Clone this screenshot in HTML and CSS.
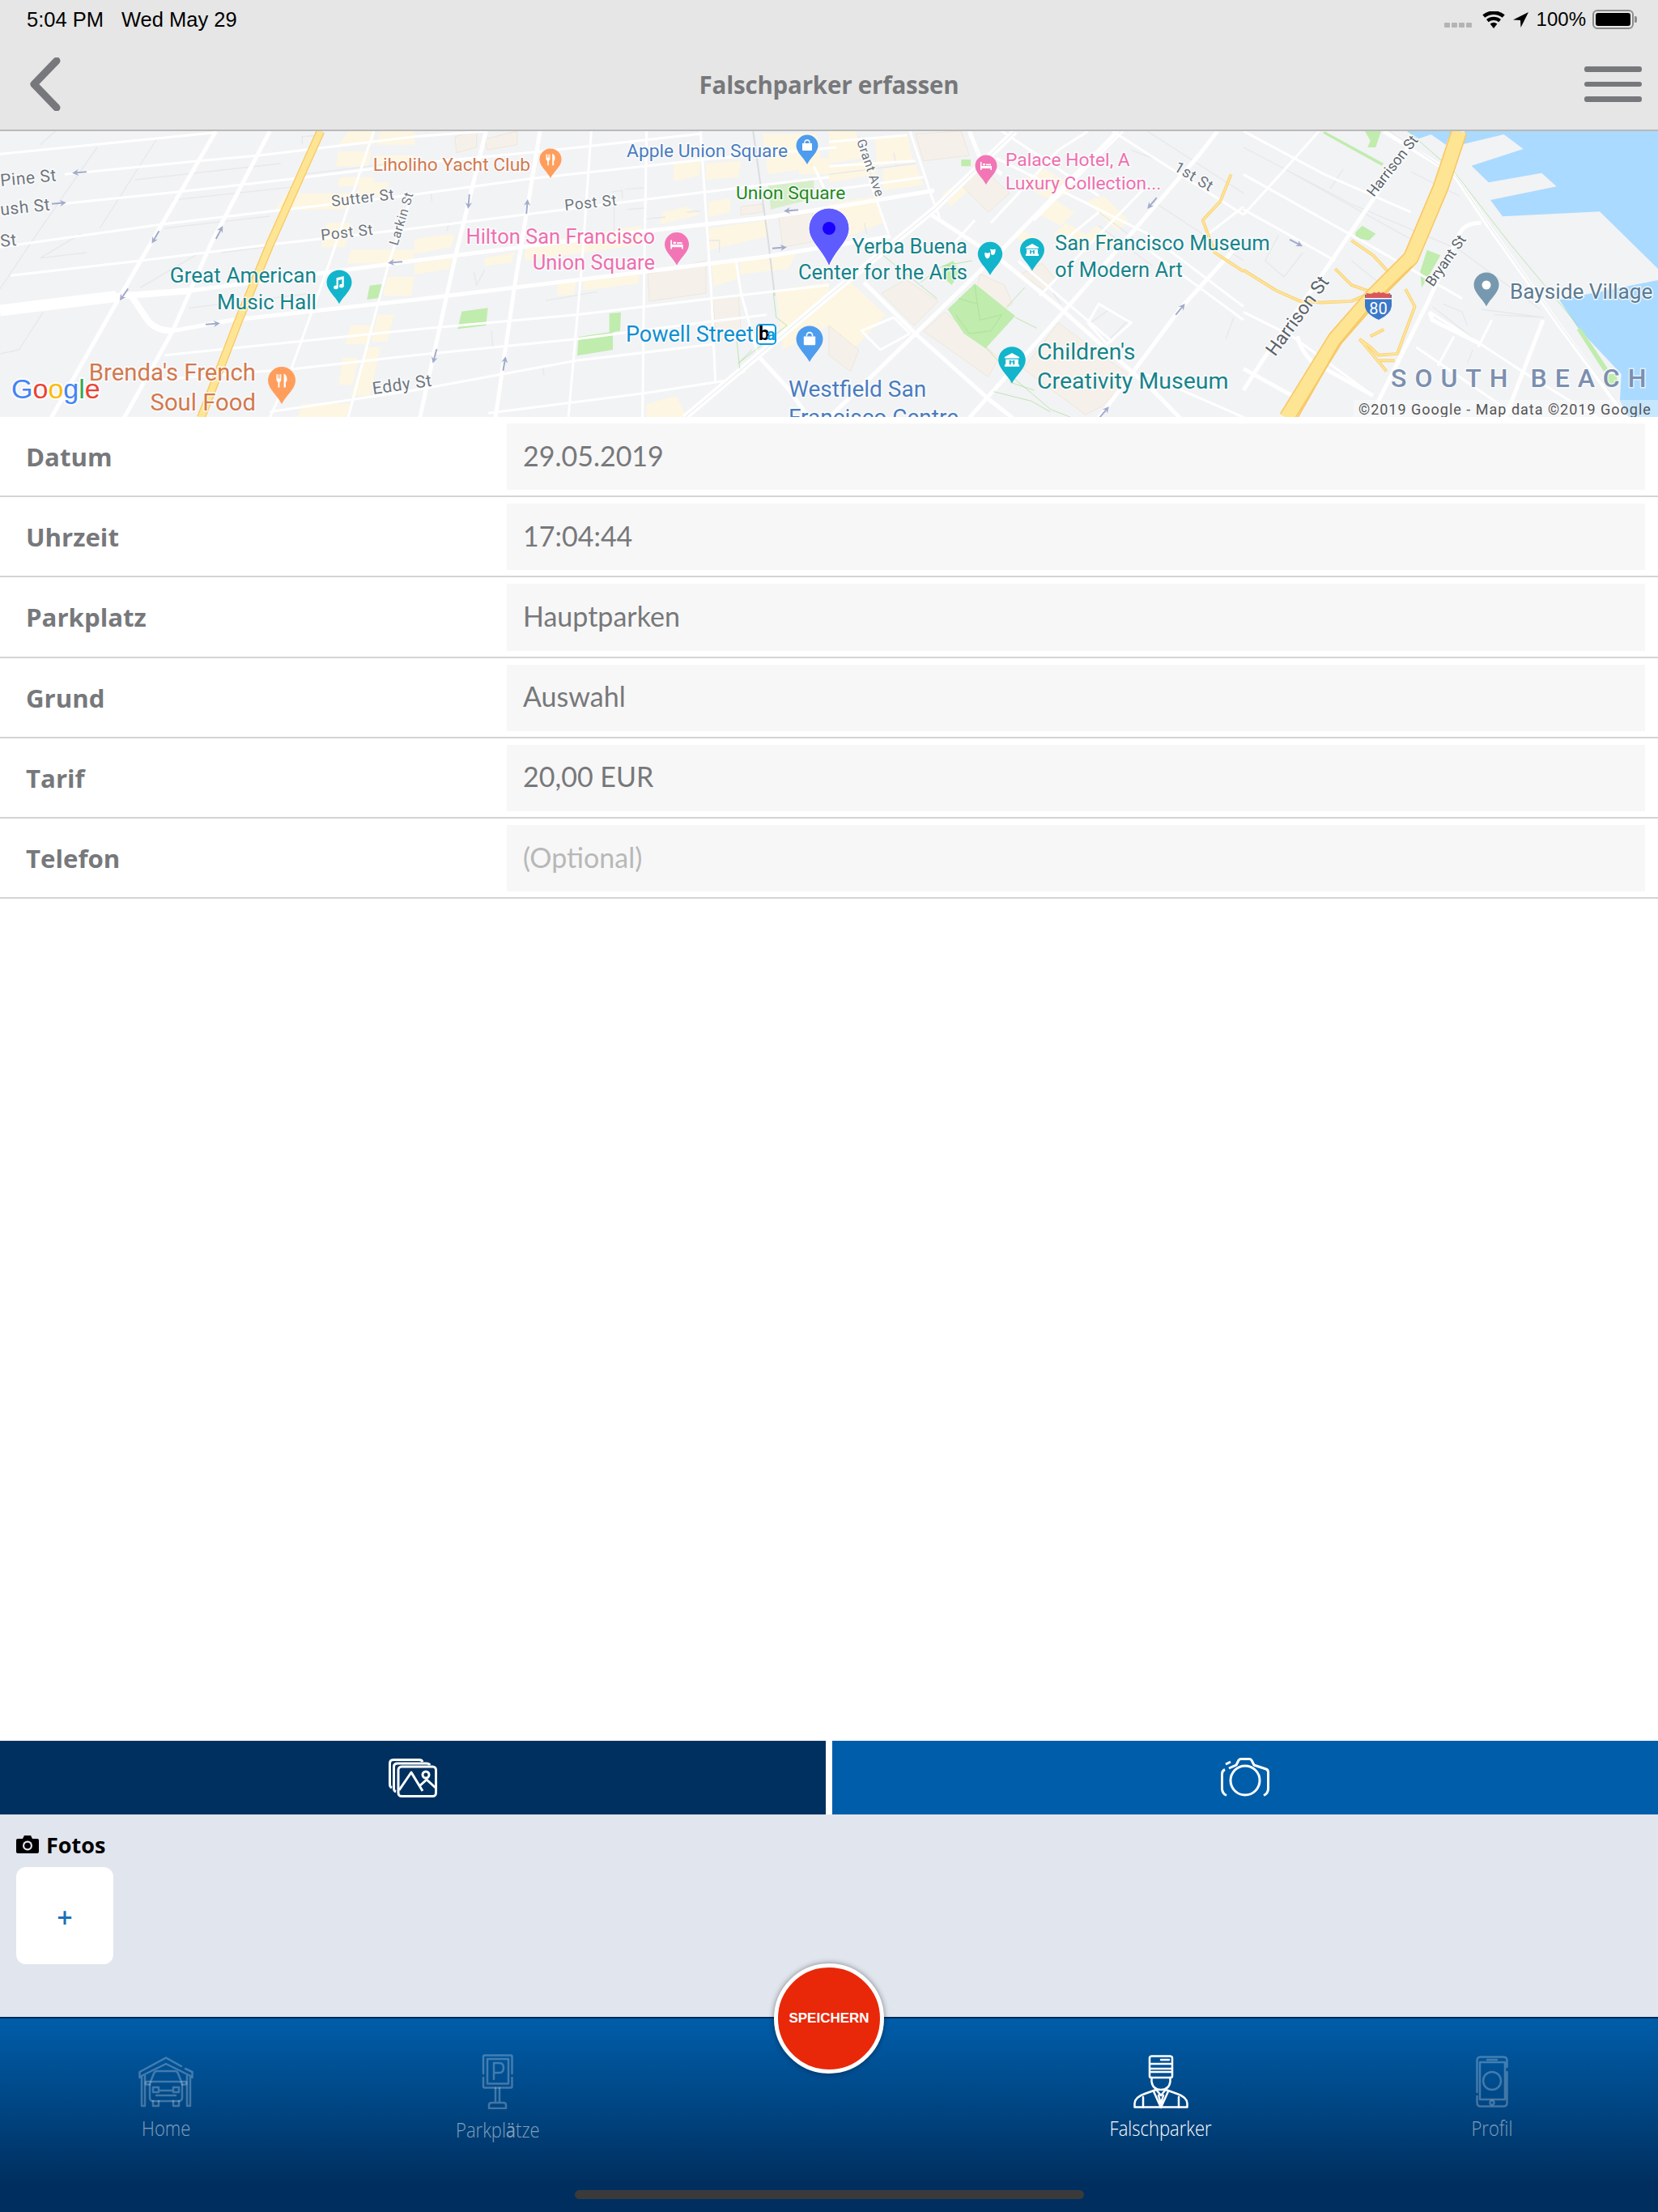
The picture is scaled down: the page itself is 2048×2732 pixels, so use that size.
FILE: index.html
```html
<!DOCTYPE html>
<html lang="de">
<head>
<meta charset="utf-8">
<title>Falschparker erfassen</title>
<link rel="stylesheet" href="styles.css">
</head>
<body>
<div class="app">
  <header class="topbar">
    <div class="status">
      <div class="status-left"><span>5:04 PM</span><span>Wed May 29</span></div>
      <div class="status-right">
        <span class="signal"><i></i><i></i><i></i><i></i></span>
        <svg class="wifi" viewBox="0 0 28 21"><path d="M14 21 9.6 15.6a7 7 0 0 1 8.8 0Z"/><path d="M7.7 13.3 5 10a14 14 0 0 1 18 0l-2.700 3.300a10 10 0 0 0-12.600 0Z"/><path d="M3.200 7.800.3 4.300a21.500 21.500 0 0 1 27.400 0l-2.900 3.500a17 17 0 0 0-21.600 0Z"/></svg>
        <svg class="loc" viewBox="0 0 19 19"><path d="M19 0 0 9.500l9 .5.500 9Z"/></svg>
        <span>100%</span>
        <span class="battery"><b></b></span>
      </div>
    </div>
    <nav class="navbar">
      <svg class="back" viewBox="0 0 40 66"><path d="M34 4 6 33l28 29"/></svg>
      <h1>Falschparker erfassen</h1>
      <div class="burger"><i></i><i></i><i></i></div>
    </nav>
  </header>

  <div class="map">
    <svg viewBox="0 0 2048 354" width="2048" height="354">
      <defs>
        <path id="pin" d="M-10 0A10 10 0 1 1 10 0C10 6 3 11 0 17-3 11-10 6-10 0Z"/>
        <path id="arr" d="M-9-1 3-1 1-4 9 0 1 4 3 1-9 1Z"/>
        <g id="g-food"><path d="M-5-6V-1Q-5 1-3.500 1.500V6.500H-2V1.500Q-.5 1-.5-1V-6H-1.500V-2H-2.200V-6H-3V-2H-3.800V-6Z"/><path d="M2-6.500Q5-5.500 5-1 5 1 3.800 1.500V6.500H2Z"/></g>
        <g id="g-bag"><path d="M-6-3H6V5Q6 6 5 6H-5Q-6 6-6 5Z"/><path d="M-3-3V-4A3 3 0 0 1 3-4V-3" fill="none" stroke="#fff" stroke-width="1.300"/></g>
        <g id="g-bed"><path d="M-7-5H-5.500V0H7V5H5.500V3H-5.500V5H-7Z"/><path d="M-4-3H-1V-.8H-4ZM0-2.500H6V-.8H0Z"/></g>
        <g id="g-note"><path d="M-3-5 5-7V3.500A2.500 2 0 1 1 3 1.700V-3.500L-1-2.500V5A2.500 2 0 1 1-3 3.200Z"/></g>
        <g id="g-mask"><path d="M-6-2Q-3-.5 0-2 .5 4-3 5-6.500 4-6-2Z"/><path d="M0-6Q3-4.500 6-6 6.500 0 3 1 1.500.8 1-.5L.8-3Z"/></g>
        <g id="g-mus"><path d="M0-7 7-3V-2H-7V-3ZM-6-1H6V4H7V6H-7V4H-6ZM-2.500 0V4H-1V2H1V4H2.500V0H1V1H-1V0Z"/></g>
      </defs>

      <rect class="land" width="2048" height="354"/>

      <g transform="scale(.33333)">
        <!-- blocks, beige -->
        <g class="beige">
          <path d="M1290 0h100l-5 50h-130zM1410 0h126v50h-140zM1255 75h120l-10 55h-120zM1390 90h146v50h-150zM1260 170h130l-15 35h-125zM1060 230h260l-30 60h-270zM1340 190h100l-15 50h-110zM1210 340h90l-20 90h-90zM1300 440h236l-10 50h-240zM1435 540h100l-10 70h-105zM1300 720h80l-20 70h-80zM1400 680h60l-25 100h-60zM1270 840h60l-25 100h-50zM1360 800h50l-40 180h-70zM1120 1010h180l-20 52h-180z"/>
          <g transform="translate(1536)">
            <path d="M0 400l150-20-15 50-135 25zM0 490l140-20-10 40-130 20zM260 470l110-20-10 35-100 15zM410 420l430-70 0 70-430 60zM530 560l70-10-10 55-60 5zM625 550l210-30-5 45-205 25zM920 300l90-20 50 30-150 35zM960 120l100-15-5 60-95 20zM1090 260l80-10 0 50-80 20zM1090 360l220-30 0 60-220 50zM1100 490l100-15 0 70-90 30zM1205 480l210-30-30 60-180 20zM1340 590l196-30v160l-170 90zM860 1010l110-30 40 82H860zM1290 10h200l20 120-200 30zM1080 120l130-10-10 60-120 10zM1420 100h116v60h-110z"/>
          </g>
          <g transform="translate(3072)">
            <path d="M0 0h100l20 100-120 20zM170 20l120-10 20 100-130 20zM0 130l170-25 5 55-175 30zM200 140l120-20 30 80-150 20zM0 270l170-30 30 100-130 50H0zM420 230l90-60 30 30-90 80zM700 190l100-50 120 70-90 50zM830 250l80 50-50 50-80-40zM950 260l70-20 90 90-40 40zM880 340l100 60-50 40-100-60zM990 350l80 60-40 30-80-50zM720 370l60 30-30 30-60-40zM0 600l80-40 130 120L70 830 0 790z"/>
          </g>
        </g>
        <!-- blocks, building tint -->
        <g class="bldg">
          <g transform="translate(1536)">
            <path d="M150 20l80-20 0 60-75 20zM260 30l120-30 0 50-110 20zM865 530l215-50 0 120-210 30zM1105 625l95-15 10 130-90 40zM1350 320l125-20 0 110-110 20zM1210 280l80-10 0 30-80 10z"/>
          </g>
          <g transform="translate(3072)">
            <path d="M320 10l170-10 30 90-170 20zM480 190l90-50 100 90-80 70zM195 600l90-50 120 80-90 90zM0 720l110 90-30 80-80-60zM350 740l80-70 200 170-40 70zM560 530l90 40 30 70-30 20-100-80zM710 530l80-40 50 60-40 40zM720 880l130-170 270 200-110 110-60 30z"/>
          </g>
        </g>
        <!-- water -->
        <g transform="translate(4608)">
          <path class="water" d="M605 0 650 28 695 12 750 50 770 0H820L805 50 965 12 1037 66 845 128 908 190 1105 155 1160 205 915 255 960 316 1320 298 1536 510V552L1170 625 1240 730 1400 900 1395 1000 1425 1062H1536V0Z"/>
        </g>
        <!-- parks -->
        <g class="green">
          <path d="M1370 572l50-6-10 52-50 6z"/>
          <g transform="translate(1536)">
            <path d="M175 668l97-13-7 65-105 13zM608 762l114-17V675l43-3-3 68-27 5v65L603 832z"/>
            <path class="pale" d="M1310 195l170-20v75l-160 40z"/>
          </g>
          <g transform="translate(3072)">
            <path d="M540 565 690 685 580 805 500 750 440 660ZM420 500l40-20 25 40-30 50-35-30zM490 105h35v25h-35z"/>
          </g>
          <g transform="translate(4608)">
            <path d="M680 440l50 20-40 70-30 50-5-60zM415 375l25-25 50 30-25 25-50-10zM300 0l220 120-8 8L295 8zM450 0h60l-20 60h-30l10-25zM1235 735l15-5 100 150-15 10zM1340 900h40l10 40-40 10z"/>
          </g>
        </g>

        <!-- thin alley lines -->
        <g class="r0">
          <path d="M500 180 1040 120M640 255 1100 205M610 360 1000 315M820 450 1020 425M700 655 1160 600M1120 160 1536 110"/>
          <path d="M360 60 130 390 0 585M580 30 370 360M205 0 150 50M160 670 70 810 0 825M300 380 150 470 320 450M740 450 520 580M1120 50 1120 20 1190 15"/>
          <g transform="translate(1536)">
            <path d="M60 225 65 260M130 335 120 370M220 520 230 570 260 515M485 628 675 595M860 325 930 318M790 290 850 285M1010 300 1060 295M285 740 290 800M475 870 480 905M1090 440V405H1130V450M730 225 770 220V250M780 215 850 210M740 260V400"/>
            <path class="rail" d="M1255 0 1310 400 1335 610"/>
          </g>
          <g transform="translate(3072)">
            <path d="M240 80 250 130M130 340 140 380M0 160 320 120M0 220 340 170M110 20 180 240M1120 70 1200 100M1040 660 970 710 1040 770 1110 700ZM1500 690 1470 770M1000 350 1200 500M830 600 860 640"/>
            <path d="M1000 300 1536 700M1180 0 1536 230M1200 260 1536 480"/>
          </g>
          <g transform="translate(4608)">
            <path d="M0 60 400 270 800 440 1100 660M170 150 620 400M370 140 320 215M130 385 80 480 150 540 220 450M700 650 880 790M930 680 1110 690 880 660M740 640 810 670 830 720M850 810 830 860M400 480 500 560M620 150 800 240"/>
          </g>
        </g>

        <!-- streets -->
        <g class="r1">
          <path d="M0 85 800 5"/>
          <path d="M240 160 720 112 960 90 1536 20 1800 0"/>
          <path d="M220 270 660 225 1100 175 1536 120 2006 75 2596 10"/>
          <path d="M0 430 600 345 1020 295 1536 235 1976 175 2610 105 3100 60"/>
          <path d="M40 535 520 480 1000 420 1536 360 2616 225 3072 170"/>
          <path d="M610 830 1536 735 2136 680 2636 620 3072 570"/>
          <path d="M600 920 1100 880 1536 830 2136 770 2636 705 2840 680"/>
          <path d="M1000 1040 1536 960 2136 850 2640 790"/>
          <path d="M1810 1045 2396 970 2686 925 2760 890"/>
          <path d="M1385 0 1220 490 1080 880 1000 1062"/>
          <path d="M1530 230 1440 490 1290 1062"/>
          <g transform="translate(1536)">
            <path d="M655 0 620 500 570 1062M860 0 850 600 845 1062M1060 0 1100 600 1115 930"/>
            <path d="M1190 470 1210 600 1270 820M1480 130 1536 250"/>
          </g>
          <g transform="translate(3072)">
            <path d="M300 0 380 240 410 320M150 180 220 380M600 340 850 70 960 0M760 330 1090 0M460 420 540 330"/>
            <path d="M0 130 320 110M0 40 290 15M0 220 350 170"/>
            <path d="M620 100 1180 380 1536 650M1050 0 1536 310M640 0 1000 240M700 480 1050 780M1000 640 1120 710 1030 790 960 710ZM1170 900 1536 1060M1130 400 1536 700"/>
            <path d="M840 430 1000 300M780 610 1180 200M1380 400 1536 280"/>
            <path d="M120 740 240 690 300 750 190 810Z"/>
          </g>
          <g transform="translate(4608)">
            <path d="M280 0 100 200 0 310M0 160 480 430 810 620M0 290 340 480M690 670 880 790 1110 940M780 760 720 870M1000 870 1536 1200M640 800 1020 1062M0 670 180 760 480 980M0 0 300 160 620 300"/>
            <path d="M920 700 870 800"/>
          </g>
        </g>
        <g class="r2">
          <path d="M800 0 440 620 190 1062M1000 0 780 420 640 740 460 1062"/>
          <path d="M700 592 1536 480 2396 370 2836 320 3072 285 3462 220"/>
          <path d="M640 740 860 700 1536 625 2396 520 2836 465 3300 390"/>
          <path class="link" d="M430 612 700 592M480 600 540 690Q570 740 640 740"/>
          <g transform="translate(1536)">
            <path d="M265 0 150 470 20 1062M465 0 370 580 300 1062"/>
            <path d="M1280 840 1390 960 1460 1062"/>
          </g>
          <g transform="translate(3072)">
            <path d="M0 1062 640 440 1070 0M520 1062 860 680 1370 90 1440 0M1000 1062 1300 660 1536 400"/>
            <path d="M380 310 640 480 850 650 1200 960 1300 1062M130 560 320 750 600 1000 680 1062M520 0 560 100 640 160"/>
          </g>
          <g transform="translate(4608)">
            <path d="M610 60 320 490 70 850 0 960M880 340Q820 340 800 380L680 640 500 1000 480 1062M1110 700 970 1062"/>
            <path d="M0 880 180 980M200 760Q210 810 250 850L480 980"/>
            <path d="M690 670 700 700 880 790"/>
          </g>
        </g>
        <path class="r3" d="M0 665 430 612"/>
        <!-- market street -->
        <g transform="translate(1536)">
          <path class="market" d="M1000 1062 1536 610"/>
          <path class="railline" d="M1000 1062 1536 610"/>
        </g>
        <g transform="translate(3072)">
          <path class="market" d="M0 610 390 290 690 0"/>
          <path class="railline" d="M0 610 390 290 690 0"/>
        </g>
        <g transform="translate(4608)">
          <path class="coast" d="M520 0 780 160 900 340 1170 720 1420 1062"/>
          <path class="railline" d="M540 0 790 170 910 350 1180 730 1430 1062"/>
        </g>

        <!-- faint park and building lines -->
        <g class="trail">
          <g transform="translate(1536)"><path d="M1330 600 1340 690 1380 720 1200 860M1195 780 1205 880M1250 810 1200 860"/></g>
          <g transform="translate(3072)"><path d="M200 460 400 620M340 560 420 500 530 480M540 570 550 640 480 620M550 640 560 700 640 680 600 740 520 750 470 680M690 690 770 730M725 580 660 650M580 800 690 920 820 1030 900 1062M610 965 750 1000 820 1040M670 930 760 960"/></g>
          <g transform="translate(4608)"><path d="M610 0 780 150 990 420 1240 720"/></g>
        </g>

        <!-- highway -->
        <path class="hw-edge" d="M1188 0 1000 420 885 700 745 1062"/>
        <path class="hw" d="M1188 0 1000 420 885 700 745 1062"/>
        <g transform="translate(3072)">
          <path class="ramp-edge" d="M1490 160 1450 260 1385 330 1400 370 1430 450 1536 520"/>
          <path class="ramp" d="M1490 160 1450 260 1385 330 1400 370 1430 450 1536 520"/>
        </g>
        <g transform="translate(4608)">
          <path class="ramp-edge" d="M0 515 120 590 210 630 290 635 400 630 470 600M340 510 400 570 470 595M400 405 480 460 545 530M600 585 635 650 590 770 570 825 500 830 470 800 430 770M430 770 530 890M470 760 520 735M500 850 560 850"/>
          <path class="ramp" d="M0 515 120 590 210 630 290 635 400 630 470 600M340 510 400 570 470 595M400 405 480 460 545 530M600 585 635 650 590 770 570 825 500 830 470 800 430 770M430 770 530 890M470 760 520 735M500 850 560 850"/>
          <path class="hw-edge wide" d="M800 0 730 210 620 470 480 610 340 770 160 1062"/>
          <path class="hw wide" d="M800 0 730 210 620 470 480 610 340 770 160 1062"/>
          <path class="hw-seam" d="M625 500 480 640 355 790 200 1062"/>
        </g>
      </g>

      <!-- one-way arrows -->
      <g class="arrows">
        <use href="#arr" transform="translate(98 51) rotate(175)"/>
        <use href="#arr" transform="translate(73 89) rotate(-5)"/>
        <use href="#arr" transform="translate(192 131) rotate(120)"/>
        <use href="#arr" transform="translate(271 125) rotate(-62)"/>
        <use href="#arr" transform="translate(153 202) rotate(125)"/>
        <use href="#arr" transform="translate(263 238) rotate(-5)"/>
        <use href="#arr" transform="translate(488 162) rotate(175)"/>
        <use href="#arr" transform="translate(579 87) rotate(95)"/>
        <use href="#arr" transform="translate(651 93) rotate(-85)"/>
        <use href="#arr" transform="translate(537 278) rotate(105)"/>
        <use href="#arr" transform="translate(623 287) rotate(-80)"/>
        <use href="#arr" transform="translate(977 98) rotate(175)"/>
        <use href="#arr" transform="translate(963 144) rotate(-5)"/>
        <use href="#arr" transform="translate(1423 89) rotate(130)"/>
        <use href="#arr" transform="translate(1458 220) rotate(-50)"/>
        <use href="#arr" transform="translate(1364 347) rotate(-50)"/>
        <use href="#arr" transform="translate(1601 138) rotate(28)"/>
      </g>

      <!-- street names -->
      <g class="st">
        <text transform="translate(1 68) rotate(-5.500)">Pine St</text>
        <text transform="translate(1 104) rotate(-6)">ush St</text>
        <text transform="translate(1 143) rotate(-6)">St</text>
        <text class="s" transform="translate(410 93) rotate(-6.500)">Sutter St</text>
        <text class="s" transform="translate(397 135) rotate(-6.500)">Post St</text>
        <text class="xs" transform="translate(491 142) rotate(-73)">Larkin St</text>
        <text class="s" transform="translate(698 98) rotate(-6)">Post St</text>
        <text transform="translate(461 325) rotate(-8)">Eddy St</text>
        <text class="xs" transform="translate(1058 12) rotate(71)">Grant Ave</text>
        <text class="s" transform="translate(1449 48) rotate(31)">1st St</text>
        <text class="h" transform="translate(1575 279) rotate(-54)">Harrison St</text>
        <text class="xs h2" transform="translate(1697 82) rotate(-52)">Harrison St</text>
        <text class="xs h2" transform="translate(1770 193) rotate(-55)">Bryant St</text>
      </g>

      <!-- places -->
      <g class="poi">
        <g class="orange end sm"><text x="655" y="49">Liholiho Yacht Club</text></g>
        <g class="orange end xl"><text x="316" y="308">Brenda's French</text><text x="316" y="345">Soul Food</text></g>
        <g class="blue end sm"><text x="973" y="32">Apple Union Square</text></g>
        <g class="lgreen sm"><text x="909" y="84">Union Square</text></g>
        <g class="pink end"><text x="809" y="139">Hilton San Francisco</text><text x="809" y="171">Union Square</text></g>
        <g class="teal end md"><text x="391" y="187">Great American</text><text x="391" y="220">Music Hall</text></g>
        <g class="sky md2"><text x="773" y="260">Powell Street</text></g>
        <g class="blue lg"><text x="974" y="328">Westfield San</text><text x="974" y="363">Francisco Centre</text></g>
        <g class="teal end"><text x="1195" y="151">Yerba Buena</text><text x="1195" y="183">Center for the Arts</text></g>
        <g class="teal"><text x="1303" y="147">San Francisco Museum</text><text x="1303" y="180">of Modern Art</text></g>
        <g class="teal lg2"><text x="1281" y="282">Children's</text><text x="1281" y="318">Creativity Museum</text></g>
        <g class="pink sm"><text x="1242" y="43">Palace Hotel, A</text><text x="1242" y="72">Luxury Collection...</text></g>
        <g class="slate md"><text x="1865" y="207">Bayside Village</text></g>
      </g>

      <!-- pins -->
      <use class="p-orange" href="#pin" transform="translate(680 35) scale(1.360)"/>
      <use class="g" href="#g-food" transform="translate(680 35) scale(1.100)"/>
      <use class="p-orange" href="#pin" transform="translate(348 308) scale(1.700)"/>
      <use class="g" href="#g-food" transform="translate(348 308) scale(1.300)"/>
      <use class="p-blue" href="#pin" transform="translate(997 18) scale(1.350)"/>
      <use class="g" href="#g-bag" transform="translate(997 18) scale(1)"/>
      <use class="p-blue" href="#pin" transform="translate(1000 257) scale(1.650)"/>
      <use class="g" href="#g-bag" transform="translate(1000 257) scale(1.200)"/>
      <use class="p-pink" href="#pin" transform="translate(836 140) scale(1.500)"/>
      <use class="g" href="#g-bed" transform="translate(836 140) scale(1.100)"/>
      <use class="p-pink" href="#pin" transform="translate(1218 43) scale(1.350)"/>
      <use class="g" href="#g-bed" transform="translate(1218 43)"/>
      <use class="p-teal" href="#pin" transform="translate(419 187) scale(1.550)"/>
      <use class="g" href="#g-note" transform="translate(419 187) scale(1.150)"/>
      <use class="p-teal" href="#pin" transform="translate(1223 152) scale(1.520)"/>
      <use class="g" href="#g-mask" transform="translate(1223 152) scale(1.100)"/>
      <use class="p-teal" href="#pin" transform="translate(1275 147) scale(1.500)"/>
      <use class="g" href="#g-mus" transform="translate(1275 147) scale(1.150)"/>
      <use class="p-teal" href="#pin" transform="translate(1250 283) scale(1.680)"/>
      <use class="g" href="#g-mus" transform="translate(1250 283) scale(1.300)"/>
      <use class="p-slate" href="#pin" transform="translate(1836 190) scale(1.550)"/>
      <circle class="g" cx="1836" cy="190" r="5.500"/>

      <!-- BART -->
      <rect class="bart" x="935" y="239" width="23" height="24" rx="4"/>
      <text class="bart-b" x="937" y="258">b</text>
      <text class="bart-a" x="947" y="258">a</text>

      <!-- I-80 -->
      <path class="shield-b" d="M1686 202V216Q1687 226 1703 233 1718 226 1719 216V202Z"/>
      <path class="shield-r" d="M1686 207 1688 200Q1695 202 1697 199 1702 201 1703 198 1704 201 1709 199 1711 202 1717 200L1719 207Z"/>
      <rect class="shield-w" x="1686" y="206" width="33" height="1.500"/>
      <text class="shield-t" x="1702.500" y="226">80</text>

      <!-- selected pin -->
      <path class="mainpin" d="M999 120A25 25 0 1 1 1049 120C1049 136 1033 145 1024 167 1015 145 999 136 999 120Z"/>
      <circle class="maindot" cx="1024" cy="120" r="8"/>

      <text class="beach" x="1718" y="316">SOUTH BEACH</text>
      <rect class="copy-bg" x="1672" y="332" width="376" height="22"/>
      <text class="copy" x="1678" y="350">©2019 Google - Map data ©2019 Google</text>
      <text class="google" x="14" y="330"><tspan class="gb">G</tspan><tspan class="gr">o</tspan><tspan class="gy">o</tspan><tspan class="gb">g</tspan><tspan class="gg">l</tspan><tspan class="gr">e</tspan></text>
    </svg>
  </div>

  <section class="form">
    <div class="row"><label>Datum</label><div class="field">29.05.2019</div></div>
    <div class="row"><label>Uhrzeit</label><div class="field">17:04:44</div></div>
    <div class="row"><label>Parkplatz</label><div class="field">Hauptparken</div></div>
    <div class="row"><label>Grund</label><div class="field">Auswahl</div></div>
    <div class="row"><label>Tarif</label><div class="field">20,00 EUR</div></div>
    <div class="row"><label>Telefon</label><div class="field placeholder">(Optional)</div></div>
  </section>

  <div class="spacer"></div>

  <div class="actions">
    <button class="act act-dark" type="button">
      <svg width="60" height="48" viewBox="0 0 60 48"><path d="M4 36Q1.500 35 1.500 32V6Q1.500 1.500 6 1.500H38Q41 1.500 42 4"/><path d="M9 41Q6.500 40 6.500 37V10Q6.500 6 11 6H47Q50 6 51 8"/><rect x="12" y="10" width="46.500" height="36.500" rx="4"/><circle cx="46" cy="20" r="4"/><path d="M13 39 28 17 42 40M38 34 47 26 58 36"/></svg>
    </button>
    <button class="act act-blue" type="button">
      <svg width="60" height="50" viewBox="0 0 60 50"><path d="M10 13 19 9 22 3Q23 1.500 25 1.500H35Q37 1.500 38 3L41 9 56 14Q58.500 15 58.500 18V38Q58.500 44 53 46.500"/><path d="M7 46.500Q1.500 44 1.500 38V20Q1.500 16 5 14.500"/><circle cx="30" cy="28" r="18"/><path d="M6 8 12 5"/></svg>
    </button>
  </div>

  <section class="photos">
    <h2><svg width="28" height="22" viewBox="0 0 28 22"><path d="M2 4H8L10 0H18L20 4H26Q28 4 28 6V20Q28 22 26 22H2Q0 22 0 20V6Q0 4 2 4Z"/><circle class="lens-ring" cx="14" cy="12.500" r="6"/><circle cx="14" cy="12.500" r="3.800"/></svg>Fotos</h2>
    <div class="addphoto">+</div>
  </section>

  <footer class="tabbar">
    <button class="save" type="button">SPEICHERN</button>
    <div class="tab">
      <svg class="ico" width="68" height="62" viewBox="0 0 68 62"><path d="M1.500 26V19L34 1.500 53 12M58 15 66.500 19V26M1.500 25 34 9 66.500 25M4 25V61H8V24M60 24V61H64V25"/><path d="M15 31 19 21Q20 18 23 18H45Q48 18 49 21L53 31"/><rect x="14" y="31" width="40" height="24" rx="4"/><path d="M14 31H9.500Q8 33 9.500 34.500H14M54 31H58.500Q60 33 58.500 34.500H54M18 55V61H25V55M43 55V61H50V55M18 38H25V44H18ZM43 38H50V44H43ZM27 42H41M22 48H46"/></svg>
      <span class="lbl">Home</span>
    </div>
    <div class="tab tab-low">
      <svg class="ico" width="39" height="68" viewBox="0 0 39 68"><path d="M2 24V3Q2 1.500 3.500 1.500H36Q37.500 1.500 37.500 3V24M37.500 29V40Q37.500 41.500 36 41.500H3.500Q2 41.500 2 40V29"/><rect x="7" y="6" width="26" height="30.500"/><path d="M15 31V11H22Q27 11 27 17T22 23H15"/><path d="M17 42V60M22 42V60M9 67V63Q9 60 12 60H27Q30 60 30 63V67Z"/></svg>
      <span class="lbl">Parkpl<b>ä</b>tze</span>
    </div>
    <div class="tab tab-empty"></div>
    <div class="tab tab-active">
      <svg class="ico" width="68" height="66" viewBox="0 0 68 66"><path d="M20 26V4Q20 1.500 23 1.500H45Q48 1.500 48 4V26Q48 28 46 28H22Q20 28 20 26ZM20 11H48M20 17H48M20 21H48M34 6H44"/><path d="M22.500 28V33Q24 43 34 43T45.500 33V28"/><path d="M28 43 14 48Q2 52 1.500 60V64.500H66.500V60Q66 52 54 48L40 43M2 64.500H66"/><path d="M25 45 34 65 43 45M29 44 34 50 39 44M31 50 34 60 37 50M12 52V64.500M56 52V64.500"/></svg>
      <span class="lbl">Falschparker</span>
    </div>
    <div class="tab">
      <svg class="ico" width="40" height="64" viewBox="0 0 40 64"><path d="M1.500 45V6Q1.500 1.500 6 1.500H34Q38.500 1.500 38.500 6V14M38.500 20V58Q38.500 62.500 34 62.500H6Q1.500 62.500 1.500 58V50"/><rect x="5" y="8" width="31" height="46"/><circle cx="20" cy="31" r="11"/><circle cx="20" cy="58" r="2.500"/><path d="M14 5H26"/></svg>
      <span class="lbl">Profil</span>
    </div>
    <div class="homebar"></div>
  </footer>
</div>
</body>
</html>
```

FILE: styles.css
```css
* { box-sizing: border-box; }
html, body { margin: 0; padding: 0; background: #fff; }
.app { width: 2048px; height: 2732px; display: flex; flex-direction: column; overflow: hidden; font-family: "Open Sans", sans-serif; }

/* top */
.topbar { background: #e6e6e6; border-bottom: 2px solid #b9b9b9; height: 162px; flex: none; }
.status { height: 48px; display: flex; justify-content: space-between; align-items: center; padding: 0 30px 0 33px; font: 25.500px "Liberation Sans", sans-serif; color: #000; }
.status-left { display: flex; gap: 22px; }
.status-right { display: flex; align-items: center; gap: 10px; font-size: 24px; }
.signal { display: flex; gap: 2px; margin-top: 14px; margin-right: 3px; }
.signal i { width: 7px; height: 6px; background: #b4b4b4; border-radius: 1px; }
.wifi { width: 28px; height: 21px; }
.loc { width: 19px; height: 19px; }
.battery { width: 51px; height: 24px; border: 2px solid #8c8c8c; border-radius: 6px; padding: 2px; position: relative; margin-left: -2px; }
.battery b { display: block; height: 100%; background: #000; border-radius: 3px; }
.battery::after { content: ""; position: absolute; right: -6px; top: 6px; width: 3px; height: 8px; background: #8c8c8c; border-radius: 0 2px 2px 0; }
.navbar { height: 112px; display: flex; align-items: center; justify-content: space-between; padding: 0 20px 0 36px; }
.back { width: 40px; height: 66px; fill: none; stroke: #77787b; stroke-width: 9; stroke-linecap: round; stroke-linejoin: round; }
.navbar h1 { margin: 0; font-size: 29.500px; font-weight: 700; letter-spacing: -.2px; color: #77787b; flex: 1; text-align: center; padding-left: 15px; }
.burger { width: 71px; display: flex; flex-direction: column; gap: 12px; }
.burger i { height: 6.500px; background: #77787b; border-radius: 3px; }

/* map */
.map { height: 353px; flex: none; overflow: hidden; }
.map svg { display: block; }
.map text { font-family: Roboto, sans-serif; }
.land { fill: #f2f3f5; }
.water { fill: #aadaff; }
.beige path { fill: #fdf6e2; }
.bldg path { fill: #f5f1ea; stroke: #efdfcd; stroke-width: 2; }
.green path { fill: #c0ecae; }
.green .pale { fill: #d8eecb; }
.r0 path, .r1 path, .r2 path, .r3, .market, .coast, .railline, .trail path { fill: none; stroke-linecap: butt; stroke-linejoin: round; }
.r0 path { stroke: #e7e8eb; stroke-width: 4; }
.r0 .rail { stroke: #dadce0; stroke-width: 6; }
.r1 path { stroke: #fff; stroke-width: 9; }
.r2 path { stroke: #fff; stroke-width: 15; }
.r2 .link { stroke-width: 24; }
.r3 { stroke: #fff; stroke-width: 42; }
.market { stroke: #fff; stroke-width: 24; }
.coast { stroke: #fff; stroke-width: 16; }
.railline { stroke: #dfe1e5; stroke-width: 2.500; }
.trail path { stroke: #a5dc8e; stroke-width: 2; }
.hw-edge, .hw, .ramp, .ramp-edge, .hw-seam { fill: none; stroke-linejoin: round; }
.hw-edge { stroke: #f8c967; stroke-width: 32; }
.hw { stroke: #fee594; stroke-width: 24; }
.hw-edge.wide { stroke-width: 60; }
.hw.wide { stroke-width: 50; }
.hw-seam { stroke: #f8c967; stroke-width: 6; }
.ramp-edge { stroke: #f8c967; stroke-width: 11; }
.ramp { stroke: #fee594; stroke-width: 7; }
.arrows use { fill: #a3abcb; }
.st text { font-size: 21px; fill: #6f7680; letter-spacing: .6px; paint-order: stroke; stroke: #fff; stroke-width: 3px; stroke-opacity: .7; }
.st .s { font-size: 19px; }
.st .xs { font-size: 16px; }
.st .h { font-size: 23px; letter-spacing: 0; fill: #5a636b; }
.st .h2 { fill: #5a636b; font-size: 18px; letter-spacing: 0; }
.poi text { font-size: 25.500px; paint-order: stroke; stroke: #fff; stroke-width: 3px; stroke-opacity: .75; }
.poi .sm text { font-size: 22.800px; }
.poi .md text { font-size: 26.200px; }
.poi .md2 text { font-size: 27px; }
.poi .lg text { font-size: 28px; }
.poi .lg2 text { font-size: 28.500px; }
.poi .xl text { font-size: 29.300px; }
.poi .end text { text-anchor: end; }
.orange text { fill: #d2794f; }
.blue text { fill: #4a7cc0; }
.lgreen text { fill: #1f8a1f; }
.pink text { fill: #ee6fb0; }
.teal text { fill: #16848c; }
.sky text { fill: #0f8fd3; }
.slate text { fill: #5b7a91; }
.p-orange { fill: #ff9e5c; }
.p-blue { fill: #4e9cee; }
.p-pink { fill: #f276b5; }
.p-teal { fill: #12b5cb; }
.p-slate { fill: #7699b0; }
.g { fill: #fff; }
.mainpin { fill: #5e5cff; stroke: #fff; stroke-width: 1; }
.maindot { fill: #1a00ff; }
.bart { fill: #fff; stroke: #0f9ae0; stroke-width: 2; }
.map .bart-b { font-size: 24px; font-weight: 700; fill: #000; }
.map .bart-a { font-size: 20px; font-weight: 700; fill: #0f9ae0; }
.shield-b { fill: #3a78c9; }
.shield-r { fill: #d9575a; }
.shield-w { fill: #fff; }
.map .shield-t { font-size: 20px; fill: #fff; text-anchor: middle; }
.map .beach { font-size: 32px; font-weight: 500; letter-spacing: 10px; fill: #7c8fb0; paint-order: stroke; stroke: #fff; stroke-width: 3px; stroke-opacity: .6; }
.copy-bg { fill: #fff; fill-opacity: .35; }
.map .copy { font-size: 18px; letter-spacing: 1px; fill: #555; }
.map .google { font-family: "Liberation Sans", sans-serif; font-size: 34px; paint-order: stroke; stroke: #fff; stroke-width: 4px; stroke-opacity: .8; }
.gb { fill: #4285f4; } .gr { fill: #ea4335; } .gy { fill: #fbbc05; } .gg { fill: #34a853; }

/* form */
.form { flex: none; }
.row { height: 99.200px; display: flex; border-bottom: 2px solid #d4d4d4; padding: 8px 16px 7px 0; align-items: stretch; }
.row label { width: 626px; flex: none; padding-left: 32px; display: flex; align-items: center; font-size: 31.200px; font-weight: 700; color: #77787b; }
.field { flex: 1; background: #f7f7f7; padding: 0 0 4px 20px; display: flex; align-items: center; font: 34px Lato, sans-serif; color: #77787b; }
.field.placeholder { color: #b8b8b8; }
.spacer { flex: 1; }

/* actions */
.actions { height: 91px; flex: none; display: flex; gap: 8px; }
.act { flex: 1; border: 0; padding: 0; display: flex; align-items: center; justify-content: center; }
.act svg { fill: none; stroke: #fff; stroke-width: 3; stroke-linejoin: round; }
.act-dark { background: #003060; }
.act-blue { background: #005da9; }

/* photos */
.photos { height: 250px; flex: none; background: #e1e5ee; padding: 17px 20px 0; }
.photos h2 { margin: 0; display: flex; align-items: center; gap: 9px; font-size: 27px; font-weight: 700; color: #000; height: 40px; }
.photos h2 svg { fill: #000; }
.lens-ring { fill: #e1e5ee; }
.addphoto { width: 120px; height: 120px; margin-top: 8px; padding-top: 4px; background: #fff; border-radius: 12px; display: flex; align-items: center; justify-content: center; font-size: 34px; font-weight: 600; color: #1d6fb8; }

/* tabs */
.tabbar { height: 241px; flex: none; position: relative; display: flex; border-top: 2px solid #002c58; background: linear-gradient(#005da9, #00437f 50%, #002f5f 85%); padding-top: 44px; }
.tab { flex: 1; display: flex; flex-direction: column; align-items: center; color: rgba(255,255,255,.26); }
.ico { flex: none; fill: none; stroke: currentColor; stroke-width: 2.500; stroke-linejoin: round; stroke-linecap: round; height: 68px; }
.lbl { font-size: 25px; font-weight: 300; line-height: 34px; margin-top: 6px; color: rgba(255,255,255,.5); transform: scaleX(.88); white-space: nowrap; }
.lbl b { font-weight: 500; }
.tab-low .lbl { margin-top: 8px; }
.tab-active { color: #fff; }
.tab-active .lbl { color: #fff; }
.save { position: absolute; left: 956px; top: -68px; width: 136px; height: 136px; border-radius: 50%; border: 5px solid #fff; background: #e9280a; box-shadow: 0 0 7px rgba(0,0,0,.45); color: #fff; font: 700 17px "Liberation Sans", sans-serif; padding: 0; }
.homebar { position: absolute; left: 710px; top: 212px; width: 629px; height: 11px; background: #3a3a3a; border-radius: 6px; }
```
